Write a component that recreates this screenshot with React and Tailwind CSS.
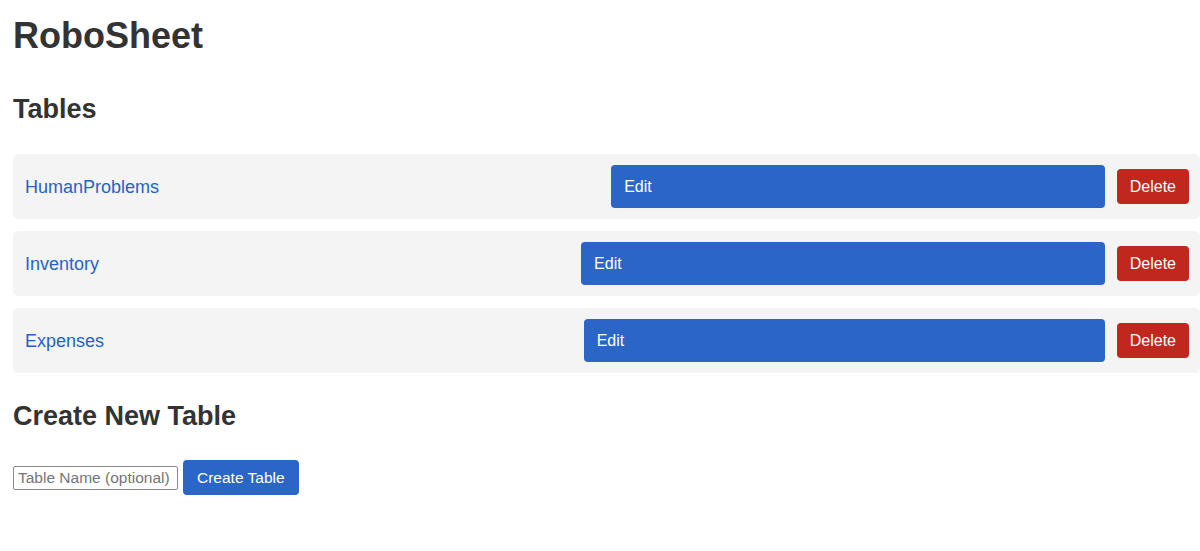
const tables = ["HumanProblems", "Inventory", "Expenses"];

function TableRow({ name }) {
  return (
    <div className="flex items-center gap-3 rounded-[5px] bg-[#f4f4f4] py-[11px] pl-3 pr-[11px]">
      <a href="#" className="grow text-[18px] leading-[22px] text-[#2563c4]">
        {name}
      </a>
      <button className="h-[43px] grow rounded-[4px] bg-[#2b66c7] px-[13px] text-left text-[16px] text-white">
        Edit
      </button>
      <button className="h-[35px] rounded-[4px] bg-[#c0271f] px-[13px] text-[16px] text-white">
        Delete
      </button>
    </div>
  );
}

export default function App() {
  return (
    <div className="min-h-screen bg-white pl-[13px] text-[#333] [font-family:'Liberation_Sans',Arial,sans-serif]">
      <h1 className="pt-[15px] text-[36px] font-bold leading-[42px]">RoboSheet</h1>

      <h2 className="mt-[37px] text-[27px] font-bold leading-[30px]">Tables</h2>

      <div className="mt-[30px] flex flex-col gap-3">
        {tables.map((t) => (
          <TableRow key={t} name={t} />
        ))}
      </div>

      <h2 className="mt-[28px] text-[27px] font-bold leading-[30px]">Create New Table</h2>

      <div className="mt-[29px] flex items-center gap-[5px]">
        <input
          type="text"
          placeholder="Table Name (optional)"
          className="h-[24px] w-[165px] rounded-[2px] border border-[#8a8a8a] px-[4px] text-[15.5px] text-[#333] placeholder:text-[#757575]"
        />
        <button className="h-[35px] rounded-[4px] bg-[#2b66c7] px-[14px] text-[15.5px] text-white">
          Create Table
        </button>
      </div>
    </div>
  );
}
